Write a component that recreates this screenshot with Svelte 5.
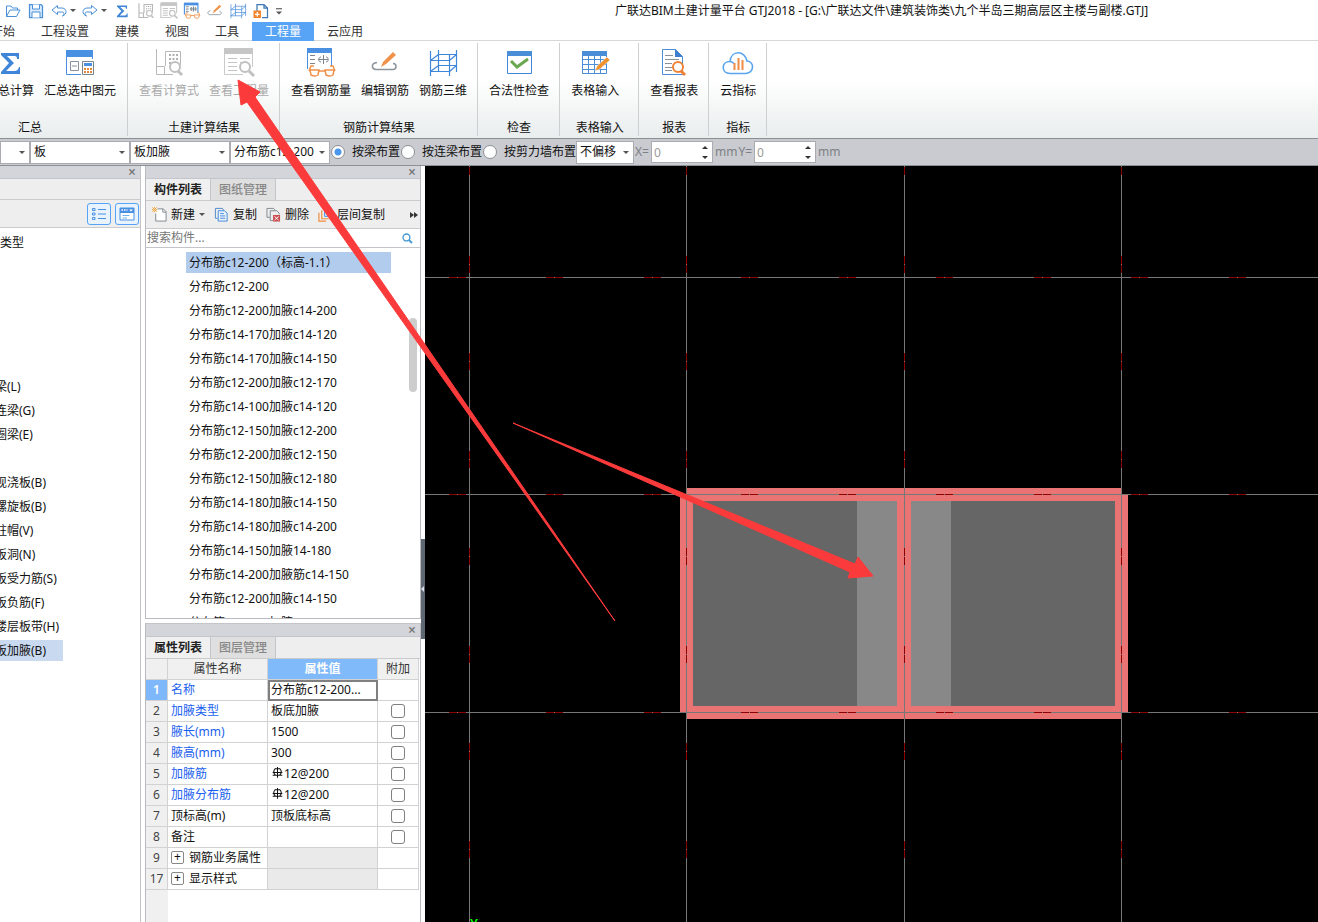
<script>
  const quickLeft = ['open', 'save', 'undo', 'caret', 'redo', 'caret', 'sigma', 'formula', 'quantity', 'rebar', 'edit', 'grid', 'newdoc', 'more'];

  const menu = ['开始', '工程设置', '建模', '视图', '工具', '工程量', '云应用'];
  let activeMenu = $state('工程量');

  const groups = [
    { name: '汇总', items: [['sigma', '汇总计算'], ['summary', '汇总选中图元']], kind: 'first' },
    { name: '土建计算结果', items: [['formula', '查看计算式'], ['quantity', '查看工程量']], disabled: true },
    { name: '钢筋计算结果', items: [['rebar', '查看钢筋量'], ['edit', '编辑钢筋'], ['grid', '钢筋三维']] },
    { name: '检查', items: [['check', '合法性检查']] },
    { name: '表格输入', items: [['table', '表格输入']], kind: 'wide' },
    { name: '报表', items: [['report', '查看报表']] },
    { name: '指标', items: [['cloud', '云指标']] }
  ];

  const layouts = ['按梁布置', '按连梁布置', '按剪力墙布置'];
  let layout = $state('按梁布置');

  // empty entries keep the rows of items that have no visible caption
  const tree = [
    '常用构件类型', '', '', '', '', '', '梁(L)', '连梁(G)', '圈梁(E)', '',
    '现浇板(B)', '螺旋板(B)', '柱帽(V)', '板洞(N)', '板受力筋(S)', '板负筋(F)', '楼层板带(H)', '板加腋(B)'
  ];

  const components = [
    '分布筋c12-200（标高-1.1）',
    '分布筋c12-200',
    '分布筋c12-200加腋c14-200',
    '分布筋c14-170加腋c14-120',
    '分布筋c14-170加腋c14-150',
    '分布筋c12-200加腋c12-170',
    '分布筋c14-100加腋c14-120',
    '分布筋c12-150加腋c12-200',
    '分布筋c12-200加腋c12-150',
    '分布筋c12-150加腋c12-180',
    '分布筋c14-180加腋c14-150',
    '分布筋c14-180加腋c14-200',
    '分布筋c14-150加腋14-180',
    '分布筋c14-200加腋筋c14-150',
    '分布筋c12-200加腋c14-150',
    '分布筋c12-200加腋c14-180'
  ];
  let selected = $state(0);

  const props = [
    { no: 1, name: '名称', value: '分布筋c12-200...', blue: true, active: true },
    { no: 2, name: '加腋类型', value: '板底加腋', blue: true, extra: true },
    { no: 3, name: '腋长(mm)', value: '1500', blue: true, extra: true },
    { no: 4, name: '腋高(mm)', value: '300', blue: true, extra: true },
    { no: 5, name: '加腋筋', value: '12@200', rebar: true, blue: true, extra: true },
    { no: 6, name: '加腋分布筋', value: '12@200', rebar: true, blue: true, extra: true },
    { no: 7, name: '顶标高(m)', value: '顶板底标高', extra: true },
    { no: 8, name: '备注', value: '', extra: true },
    { no: 9, name: '钢筋业务属性', group: true },
    { no: 17, name: '显示样式', group: true }
  ];

  const axesX = [44, 261, 479, 696];
  const axesY = [111, 328, 546];
</script>

{#snippet icon(name)}
  <svg class="icon icon-{name}" viewBox="0 0 32 32" fill="none" aria-hidden="true">
    {#if name === 'open'}
      <path d="M3 27V6h9l3 4h10v4M3 27l7-13h20l-7 13z" stroke="#4a90d9" stroke-width="2" />
    {:else if name === 'save'}
      <path d="M3 3h23l3 3v23H3z" fill="#d9eafb" stroke="#4a90d9" stroke-width="2.5" />
      <path d="M9 3v9h14V3M8 29V18h16v11" fill="#fff" stroke="#4a90d9" stroke-width="2" />
    {:else if name === 'undo' || name === 'redo'}
      <path d="M13 5 2 14l11 9v-5h9c5 0 5 5 1 8 9-3 10-15-1-16h-9z" stroke="#4a90d9" stroke-width="2" transform={name === 'redo' ? 'matrix(-1 0 0 1 32 0)' : undefined} />
    {:else if name === 'sigma'}
      <path d="M7 6h18v6h-2c0-3-1-3-4-3h-6l7 7-8 8h8c3 0 4-1 5-4h1v7H7v-2l8-9-8-8z" fill="#3f86d8" />
    {:else if name === 'summary'}
      <path d="M2.500 3.500h26V12M2.500 3.500v24H17" stroke="#4a90e2" />
      <path d="M2 3h27v7H2z" fill="#4a90e2" />
      <path d="M6.500 14.500h8v9h-8zM8 19h5" stroke="#8a9299" />
      <path d="M18.500 14.500h11v13h-11z" fill="#fff" stroke="#7a848c" />
      <path d="M20 16h8v3h-8z" fill="#4a90e2" />
      <path d="M20 22h8M20 25h8" stroke="#e58a3c" stroke-width="2" stroke-dasharray="2 1" />
    {:else if name === 'formula'}
      <path d="M3.500 2v25.500H20M4 19.500h7.500v8M12.500 19V4.500h15V18" stroke="#b8b8b8" />
      <path d="M16 8h9M16 12h9M16 16h3" stroke="#b0b0b0" stroke-width="2" stroke-dasharray="2 1.500" />
      <circle cx="22" cy="20" r="5" fill="#fff" stroke="#c0c0c0" stroke-width="2" />
      <path d="m25 24 4 4" stroke="#c0c0c0" stroke-width="3" />
    {:else if name === 'quantity'}
      <path d="M1.500 1.500h28V20M1.500 2v25.500H20" stroke="#cacaca" />
      <path d="M1 1h29v6H1z" fill="#c6c6c6" />
      <path d="M5 11.500h9M5 15.500h9M5 19.500h9M5 23.500h9M17 11.500h10M17 15.500h3" stroke="#c4c4c4" />
      <circle cx="22" cy="20" r="5" fill="#fff" stroke="#c0c0c0" stroke-width="2" />
      <path d="m26 24 5 5" stroke="#c0c0c0" stroke-width="3" />
    {:else if name === 'rebar'}
      <path d="M2.500 2v20M26.500 2v17" stroke="#4a90e2" />
      <path d="M2 1h25v5H2z" fill="#4a90e2" />
      <path d="M5 8.500h5M5 12.500h5M5 16.500h5M13 12.500h10M18.500 8v9" stroke="#7d858c" />
      <path d="M16 10c-3 0-3 5 0 5M21 10c3 0 3 5 0 5" stroke="#7d858c" />
      <path d="M4 24l2-5h3M30 24l-2-5h-3M14 24h6" stroke="#f0914a" stroke-width="1.500" />
      <path d="M5 23h9l-1 5q-3 2-7 0zM20 23h9l-1 5q-3 2-7 0z" stroke="#f0914a" stroke-width="1.500" />
    {:else if name === 'edit'}
      <path d="M8 15.500c-7 1-5 7-1 7h17c4 0 4-6 0-6" stroke="#8d959c" stroke-width="1.500" />
      <path d="m12 20 2-5L24 5l3 3-10 9z" fill="#f0914a" />
    {:else if name === 'grid'}
      <path d="M3.500 4v25M11.500 3v22M22.500 8v21M29.500 3v22M11 7.500h18.500M3 13.500h19.500M11 18.500h18.500M3 24.500h19.500M3.500 13.500l8-6M22.500 13.500l7-6M3.500 24.500l8-6M22.500 24.500l7-6" stroke="#3f86d8" stroke-width="1.200" />
    {:else if name === 'newdoc'}
      <path d="M8 16V3h14l7 7v19H18M22 3v7h7" stroke="#3e78b5" stroke-width="2.500" />
      <path d="M1 15h15v15H1z" fill="#f0852d" />
      <path d="M4 22.500h9M8.500 18v9" stroke="#fff" stroke-width="2.500" />
    {:else if name === 'check'}
      <path d="M4.500 4.500h24v22h-24z" fill="#fff" stroke="#3f86d8" />
      <path d="M4 4h25v5H4z" fill="#4a8ed8" />
      <path d="m8 14 6 6L25 12" stroke="#6aa84f" stroke-width="3" />
    {:else if name === 'table'}
      <path d="M3.500 4.500h24v22h-24zM4 12.500h23M4 17.500h23M4 22.500h23M9.500 9v17M15.500 9v17M21.500 9v17" stroke="#4a8ed8" />
      <path d="M3 4h25v5H3z" fill="#4a8ed8" />
      <path d="m16 24 2-5L28 10l3 3-10 9z" fill="#f0912d" stroke="#fff" stroke-width=".5" />
    {:else if name === 'report'}
      <path d="M4.500 2.500h13l7 7v18h-20z" fill="#fff" stroke="#4a8ed8" />
      <path d="M17 2v8h8z" fill="#3f7fd0" />
      <path d="M7 8.500h8M7 12.500h14M7 16.500h7M7 20.500h7M7 23.500h7" stroke="#8a9299" />
      <circle cx="20" cy="20" r="5" fill="#fff" stroke="#ef8135" stroke-width="2" />
      <path d="m23 24 4 4" stroke="#ef8135" stroke-width="3" />
    {:else if name === 'cloud'}
      <path d="M8 26.500c-9 0-9-12 0-12C9 3 23 3 25 14c8 1 7 12-1 12.500zM8 14.500q2 0 4 2" stroke="#5aa5ee" stroke-width="1.600" />
      <path d="M12.500 16v7M16.500 11v12M20.500 13v10" stroke="#f08a45" stroke-width="2" />
    {:else if name === 'more'}
      <path d="M8 10h16" stroke="#555" stroke-width="3" />
      <path d="M8 17h16l-8 8z" fill="#555" />
    {:else if name === 'list'}
      <path d="M3 5h5v4H3zM3 14h5v4H3zM3 23h5v4H3zM14 7h16M14 16h16M14 25h16" stroke="#4a90e2" stroke-width="2" />
    {:else if name === 'card'}
      <path d="M2 4h28v24H2z" fill="#fff" stroke="#4a90e2" stroke-width="2" />
      <path d="M2 4h28v10H2z" fill="#4a90e2" />
      <path d="M5 8h12" stroke="#fff" stroke-width="3" stroke-dasharray="3 2" />
      <path d="M7 19h14M7 24h9" stroke="#6fb0f2" stroke-width="2" />
      <path d="M20 7h8l-4 4z" fill="#fff" />
    {:else if name === 'new'}
      <path d="M12 4h12l6 6v20H8V14" fill="#fff" stroke="#7d868e" stroke-width="2" />
      <path d="M23 4v7h7" stroke="#7d868e" stroke-width="2" />
      <path d="M1 1l9 9M10 1l-9 9M5.500 0v3M5.500 8v3M0 5.500h3M8 5.500h3" stroke="#f0a030" stroke-width="2" />
    {:else if name === 'copy'}
      <path d="M8 24H3V3h15l3 4" stroke="#4a86c5" stroke-width="2" />
      <path d="M9 8h13l6 5v17H9zM13 14h8M13 19h11M13 24h11" fill="#eaf3fc" stroke="#3f86d8" stroke-width="2" />
    {:else if name === 'delete'}
      <path d="M8 22H2V3h14l4 4M15 29H9V8h14l5 5v3" stroke="#7d868e" stroke-width="2" />
      <path d="M15 17h15v14H15z" fill="#c94c50" />
      <path d="m18 20 9 8m0-8-9 8" stroke="#fff" stroke-width="2" />
    {:else if name === 'floors'}
      <path d="M2 12v18h15M8 7v18h15" stroke="#ef8d3e" stroke-width="2.500" />
      <path d="M14 2h15v18H14z" fill="#cfe2fb" stroke="#4a90e2" stroke-width="2" />
    {:else if name === 'search'}
      <circle cx="13" cy="13" r="10" stroke="#4a9ad4" stroke-width="4" />
      <path d="m20 20 9 9" stroke="#4a9ad4" stroke-width="6" />
    {:else if name === 'steel'}
      <path d="M16 0v31M2 24h28M2 16h28M10 4q-10 10 0 20M22 4q10 10 0 20M8 5h16" stroke="#111" stroke-width="3" />
    {/if}
  </svg>
{/snippet}

{#snippet dock(first, second)}
  <header class="dock-bar"><button class="close" aria-label="关闭">×</button></header>
  <div class="tabs">
    <button class="tab current">{first}</button>
    <button class="tab">{second}</button>
  </div>
{/snippet}

{#snippet combo(label, value, kind)}
  <span class="combo {kind}">
    <select aria-label={label}><option>{value}</option></select>
  </span>
{/snippet}

{#snippet offset(axis)}
  <label class="offset">
    <span>{axis}=</span>
    <span class="spin"><input type="text" inputmode="numeric" value="0" disabled /></span>
    <span>mm</span>
  </label>
{/snippet}

<div class="window">
  <header class="title-bar">
    <div class="quick">
      {#each quickLeft as name}
        {#if name === 'caret'}
          <span class="caret"></span>
        {:else}
          <button aria-label={name}>{@render icon(name)}</button>
        {/if}
      {/each}
    </div>
    <h1>广联达BIM土建计量平台 GTJ2018 - [G:\广联达文件\建筑装饰类\九个半岛三期高层区主楼与副楼.GTJ]</h1>
  </header>

  <nav class="menu">
    {#each menu as item}
      <button class:active={activeMenu === item} onclick={() => (activeMenu = item)}>{item}</button>
    {/each}
  </nav>

  <div class="ribbon">
    {#each groups as group}
      <section class="group {group.kind ?? ''}">
        <div class="tools">
          {#each group.items as [name, label]}
            <button class="tool" disabled={group.disabled}>
              {@render icon(name)}
              <span>{label}</span>
            </button>
          {/each}
        </div>
        <h2>{group.name}</h2>
      </section>
    {/each}
  </div>

  <div class="options">
    {@render combo('楼层', '', 'tiny')}
    {@render combo('构件分类', '板', '')}
    {@render combo('构件类型', '板加腋', '')}
    {@render combo('构件', '分布筋c12-200', '')}
    <div class="radios">
      {#each layouts as item}
        <label><input type="radio" name="layout" value={item} bind:group={layout} />{item}</label>
      {/each}
    </div>
    {@render combo('偏移', '不偏移', 'short')}
    {@render offset('X')}
    {@render offset('Y')}
  </div>

  <main>
    <aside class="nav-panel">
      <header class="dock-bar"><button class="close" aria-label="关闭">×</button></header>
      <div class="nav-head"></div>
      <div class="nav-views">
        <button aria-label="列表">{@render icon('list')}</button>
        <button aria-label="卡片">{@render icon('card')}</button>
      </div>
      <ul class="tree">
        {#each tree as item, i}
          <li class:root={i === 0} class:picked={i === tree.length - 1}>{item}</li>
        {/each}
      </ul>
    </aside>

    <div class="side">
      <section class="panel">
        {@render dock('构件列表', '图纸管理')}
        <div class="toolbar">
          <button>{@render icon('new')}新建<span class="caret"></span></button>
          <button>{@render icon('copy')}复制</button>
          <button>{@render icon('delete')}删除</button>
          <button>{@render icon('floors')}层间复制</button>
          <button class="overflow" aria-label="更多"><i></i><i></i></button>
        </div>
        <label class="search">
          <input type="text" placeholder="搜索构件..." aria-label="搜索构件" />
          {@render icon('search')}
        </label>
        <div class="list">
          <ul>
            {#each components as item, i}
              <li><button class:picked={selected === i} onclick={() => (selected = i)}>{item}</button></li>
            {/each}
          </ul>
          <div class="thumb"></div>
        </div>
      </section>

      <section class="panel lower">
        {@render dock('属性列表', '图层管理')}
        <div class="props">
          <table>
            <thead>
              <tr><th class="no"></th><th>属性名称</th><th class="hot">属性值</th><th class="add">附加</th></tr>
            </thead>
            <tbody>
              {#each props as row}
                <tr class:active={row.active}>
                  <th class="no">{row.no}</th>
                  <td class:blue={row.blue}>
                    {#if row.group}<button class="expand" aria-label="展开">+</button>{/if}{row.name}
                  </td>
                  <td class="value" class:grey={row.group}>
                    {#if row.rebar}{@render icon('steel')}{/if}{row.value ?? ''}
                  </td>
                  <td class="add">
                    {#if row.extra}<input type="checkbox" aria-label="附加 {row.name}" />{/if}
                  </td>
                </tr>
              {/each}
            </tbody>
          </table>
        </div>
      </section>
      <button class="collapse" aria-label="收起"></button>
    </div>

    <svg class="drawing" aria-label="板加腋平面图">
      <rect x="268" y="335" width="422" height="205" fill="#666" />
      <rect x="432" y="335" width="94" height="205" fill="#888" />
      <g fill="#ea7474">
        <rect x="262" y="322" width="435" height="13" />
        <rect x="261" y="540" width="436" height="13" />
        <rect x="255" y="329" width="13" height="217" />
        <rect x="472" y="329" width="14" height="217" />
        <rect x="690" y="329" width="13" height="217" />
      </g>
      {#each axesX as x}
        <line class="axis" x1={x + 0.5} x2={x + 0.5} y1="0" y2="100%" />
        <line class="dash" x1={x + 0.5} x2={x + 0.5} y1="-8" y2="100%" />
      {/each}
      {#each axesY as y}
        <line class="axis" y1={y + 0.5} y2={y + 0.5} x1="0" x2="100%" />
        <line class="dash" y1={y + 0.5} y2={y + 0.5} x1="-74" x2="100%" />
      {/each}
      <text x="45" y="762">Y</text>
    </svg>
  </main>

  <svg class="marks" aria-hidden="true">
    <path d="M238 80 260 92 255 97 615 621 247 102 241 105z" />
    <path d="M873 576 858 557 855 564 513 423 850 572 848 578z" />
  </svg>
</div>

<style>
  :global(body) {
    background: #fff;
  }

  .window {
    position: relative;
    display: flex;
    flex-direction: column;
    height: 100vh;
    overflow: hidden;
    font: 12px/20px "Noto Sans", "Noto Sans CJK SC", sans-serif;
    color: #111;
  }

  button,
  input,
  select {
    font: inherit;
    color: inherit;
  }

  button {
    padding: 0;
    border: 0;
    background: none;
    white-space: nowrap;
  }

  h1,
  h2,
  ul {
    margin: 0;
    padding: 0;
    font-size: 12px;
    font-weight: 400;
    list-style: none;
  }

  .icon {
    display: block;
    flex: none;
    width: 16px;
    height: 16px;
  }

  .caret {
    flex: none;
    border: 3px solid transparent;
    border-top-color: #555;
    border-bottom: 0;
  }

  .title-bar {
    display: flex;
    flex: none;
    align-items: center;
    height: 21px;
  }

  .quick {
    display: flex;
    flex: none;
    align-items: center;
    gap: 7px;
    width: 615px;
    padding-left: 5px;
    box-sizing: border-box;
  }

  .quick .caret {
    margin: 0 -1px 0 -4px;
  }

  .quick .icon-sigma {
    width: 18px;
    height: 18px;
  }

  .quick .icon-formula,
  .quick .icon-quantity,
  .quick .icon-rebar,
  .quick .icon-edit,
  .quick .icon-grid {
    width: 18px;
    height: 18px;
    margin: 0 -1px;
    stroke-width: 2px;
  }

  .quick .icon-more {
    width: 12px;
    height: 12px;
    margin-left: -3px;
  }

  h1 {
    white-space: nowrap;
  }

  .menu {
    display: flex;
    flex: none;
    height: 18px;
    margin-top: 1px;
    border-bottom: 1px solid #d6d8da;
  }

  .menu button {
    height: 19px;
    padding: 0 13px;
    color: #333;
  }

  .menu button:first-child {
    margin-left: -22px;
  }

  .menu .active {
    background: #57a3f5;
    color: #fff;
  }

  .ribbon {
    display: flex;
    flex: none;
    height: 97px;
    background: linear-gradient(#fff 40%, #e9eded);
    border-bottom: 1px solid #8c9095;
  }

  .group {
    display: flex;
    flex: none;
    flex-direction: column;
    justify-content: space-between;
    height: 93px;
    margin-top: 2px;
    padding: 0 5px 0 6px;
    border-right: 1px solid #cdd0d2;
    box-sizing: border-box;
  }

  .group.first {
    margin-left: -67px;
    padding-left: 48px;
    padding-right: 6px;
  }

  .group.first h2 {
    margin-left: -42px;
  }

  .group.wide {
    padding-right: 14px;
  }

  .group.wide h2 {
    margin-right: -9px;
  }

  .tools {
    display: flex;
  }

  .tool {
    display: flex;
    flex-direction: column;
    align-items: center;
    gap: 2px;
    padding: 4px 5px 0;
  }

  .tool .icon {
    width: 32px;
    height: 32px;
  }

  .tool:disabled {
    color: #aaa;
  }

  h2 {
    line-height: 16px;
    text-align: center;
  }

  .options {
    display: flex;
    flex: none;
    align-items: center;
    height: 26px;
    background: #c9cbd0;
    border-bottom: 1px solid #8c9095;
  }

  .combo {
    position: relative;
    flex: none;
    width: 100px;
    height: 23px;
  }

  .combo.tiny {
    width: 30px;
  }

  .combo.short {
    width: 58px;
  }

  .combo::after {
    position: absolute;
    top: 10px;
    right: 5px;
    border: 3px solid transparent;
    border-top-color: #555;
    border-bottom: 0;
    content: "";
    pointer-events: none;
  }

  .combo select {
    width: 100%;
    height: 100%;
    padding: 0 0 0 3px;
    appearance: none;
    background: #fff;
    border: 1px solid #a9abb0;
    border-radius: 0;
  }

  .radios {
    display: flex;
  }

  .radios label {
    display: flex;
    align-items: center;
    gap: 7px;
    white-space: nowrap;
  }

  input[type="radio"] {
    width: 14px;
    height: 14px;
    margin: 0 0 0 1px;
    appearance: none;
    background: #fff;
    border: 1px solid #8d8f92;
    border-radius: 50%;
  }

  input[type="radio"]:checked {
    background: radial-gradient(#4a97ee 0 3px, #fff 4px);
  }

  .offset {
    display: flex;
    align-items: center;
    gap: 2px;
    padding-left: 1px;
    color: #7d8084;
  }

  .spin {
    position: relative;
    width: 62px;
    height: 22px;
  }

  .spin input {
    display: block;
    width: 100%;
    height: 100%;
    padding: 0 2px;
    background: #fff;
    border: 1px solid #a9abb0;
    box-sizing: border-box;
    color: #999;
  }

  .spin::before,
  .spin::after {
    position: absolute;
    right: 5px;
    border: 3px solid transparent;
    content: "";
  }

  .spin::before {
    top: 5px;
    border-top: 0;
    border-bottom-color: #333;
  }

  .spin::after {
    bottom: 4px;
    border-bottom: 0;
    border-top-color: #333;
  }

  main {
    display: flex;
    flex: 1;
    min-height: 0;
  }

  .nav-panel {
    flex: none;
    width: 140px;
    border-right: 1px solid #c3c4ca;
    overflow: hidden;
  }

  .dock-bar {
    display: flex;
    flex: none;
    justify-content: flex-end;
    height: 12px;
    padding-right: 4px;
    background: #d4d5db;
    border-bottom: 1px solid #c3c5cb;
  }

  .close {
    color: #777;
    font-size: 14px;
    font-weight: 600;
    line-height: 12px;
  }

  .nav-head {
    height: 20px;
    background: #eee;
    border-bottom: 1px solid #c9cacc;
  }

  .nav-views {
    display: flex;
    justify-content: flex-end;
    gap: 4px;
    padding: 3px 1px 2px;
    background: #eee;
    border-bottom: 1px solid #c9cacc;
  }

  .nav-views button {
    padding: 2px 3px;
    background: #e9f3fe;
    border: 1px solid #57a3f5;
    border-radius: 3px;
  }

  .tree {
    padding-top: 4px;
  }

  .tree li {
    height: 21px;
    margin: 0 77px 3px -9px;
    padding-left: 4px;
    line-height: 21px;
    white-space: nowrap;
  }

  .tree .root {
    margin-left: -52px;
  }

  .tree .picked {
    background: #c8d9f0;
  }

  .side {
    position: relative;
    display: grid;
    flex: none;
    grid-template-rows: 453fr 299fr;
    gap: 4px;
    width: 276px;
    margin: 0 4px;
  }

  .panel {
    display: flex;
    flex-direction: column;
    min-height: 0;
    border: 1px solid #b9bbc0;
    border-top: 0;
    overflow: hidden;
  }

  .panel.lower {
    border-top: 1px solid #c3c5cb;
    border-bottom: 0;
  }

  .tabs {
    display: flex;
    flex: none;
    height: 21px;
    background: #eee;
    border-bottom: 1px solid #c9cacc;
  }

  .tab {
    width: 65px;
    height: 21px;
    background: #dfdfdf;
    border-right: 1px solid #c3c5cb;
    color: #888;
    font-weight: 500;
  }

  .tab.current {
    background: #f0f0f0;
    color: #222;
    font-weight: 600;
  }

  .toolbar {
    display: flex;
    flex: none;
    align-items: center;
    gap: 9px;
    height: 27px;
    padding: 0 2px 0 6px;
    background: #eee;
    border-bottom: 1px solid #c9cacc;
  }

  .toolbar button {
    display: flex;
    align-items: center;
    gap: 4px;
  }

  .toolbar .icon {
    width: 15px;
    height: 15px;
  }

  .toolbar .overflow {
    gap: 0;
    margin-left: auto;
  }

  .overflow i {
    border: 3px solid transparent;
    border-left: 4px solid #333;
    border-right: 0;
  }

  .search {
    display: flex;
    flex: none;
    align-items: center;
    height: 18px;
    padding-right: 7px;
    border-bottom: 1px solid #c3c5cb;
  }

  .search input {
    flex: 1;
    height: 16px;
    padding: 0 1px;
    border: 0;
  }

  .search input::placeholder {
    color: #777;
  }

  .search .icon {
    width: 11px;
    height: 11px;
  }

  .list {
    position: relative;
    flex: 1;
    min-height: 0;
    overflow: hidden;
    padding: 4px 0 0 40px;
  }

  .list li {
    height: 24px;
  }

  .list button {
    display: block;
    width: 205px;
    height: 21px;
    padding-left: 3px;
    text-align: left;
    line-height: 21px;
  }

  .list .picked {
    background: #b2ccee;
  }

  .thumb {
    position: absolute;
    top: 19%;
    right: 3px;
    width: 8px;
    height: 20%;
    background: #cdcdcd;
    border-radius: 4px;
  }

  .props {
    flex: 1;
    background: linear-gradient(90deg, #f0f0f0 22px, #fff 22px);
  }

  table {
    width: 273px;
    border-collapse: separate;
    border-spacing: 0;
    table-layout: fixed;
  }

  th,
  td {
    height: 20px;
    padding: 0 0 0 3px;
    border-right: 1px solid #d2d2d2;
    border-bottom: 1px solid #d2d2d2;
    font-weight: 400;
    line-height: 20px;
    text-align: left;
    white-space: nowrap;
  }

  thead th {
    padding: 0;
    background: #f0f0f0;
    color: #333;
    text-align: center;
  }

  .no {
    width: 21px;
    padding: 0;
    background: #f0f0f0;
    color: #444;
    text-align: center;
  }

  .active .no {
    background: #7fb8fa;
    color: #fff;
    font-weight: 600;
  }

  thead .hot {
    width: 109px;
    background: #81bafa;
    color: #fff;
    font-weight: 600;
  }

  thead .add {
    width: 40px;
  }

  td.add {
    padding: 0;
    text-align: center;
  }

  .blue {
    color: #1a5fee;
  }

  .active .value {
    outline: 2px solid #808080;
    outline-offset: -2px;
  }

  .grey {
    background: #eaeaea;
  }

  .value .icon {
    display: inline-block;
    width: 11px;
    height: 11px;
    margin: 0 1px;
  }

  .expand {
    width: 13px;
    height: 13px;
    margin-right: 5px;
    border: 1px solid #888;
    border-radius: 2px;
    line-height: 10px;
    vertical-align: 1px;
  }

  input[type="checkbox"] {
    display: block;
    width: 14px;
    height: 14px;
    margin: 0 auto;
    appearance: none;
    background: #fff;
    border: 1px solid #808080;
    border-radius: 3px;
  }

  .collapse {
    position: absolute;
    top: 373px;
    right: -4px;
    width: 4px;
    height: 100px;
    background: #5d6872;
  }

  .collapse::after {
    display: block;
    width: 0;
    border: 3px solid transparent;
    border-left: 0;
    border-right-color: #dde;
    content: "";
  }

  .drawing {
    display: block;
    flex: 1;
    min-width: 0;
    height: 100%;
    background: #000;
  }

  .axis {
    stroke: #777;
  }

  .dash {
    stroke: #8b0000;
    stroke-dasharray: 8 1 8 81 8 1 8 80;
  }

  .drawing text {
    fill: #0f0;
    font-size: 13px;
    font-weight: 600;
  }

  .marks {
    position: absolute;
    inset: 0;
    width: 100%;
    height: 100%;
    fill: #fb3b3b;
    stroke: #fb3b3b;
    stroke-linejoin: round;
    pointer-events: none;
  }
</style>
